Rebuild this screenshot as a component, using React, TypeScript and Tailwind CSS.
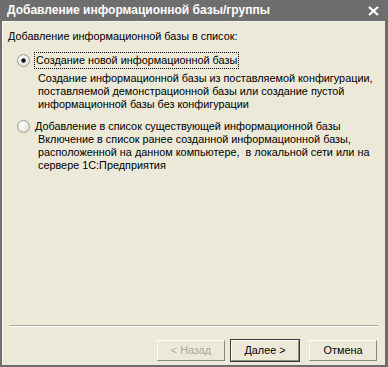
import React from "react";

function Btn({ children, def, disabled }: { children: React.ReactNode; def?: boolean; disabled?: boolean }) {
  return (
    <div
      className={
        "w-[70px] h-[23px] flex items-center justify-center " +
        (def ? "border border-[#3a3a3a]" : "border border-transparent")
      }
    >
      <div
        className={
          "w-full h-full flex items-center justify-center border-t border-l border-t-white border-l-white border-b border-r border-b-[#8a877c] border-r-[#8a877c] " +
          (disabled ? "text-[#aca899]" : "text-black")
        }
      >
        {children}
      </div>
    </div>
  );
}

function Radio({ checked }: { checked?: boolean }) {
  return (
    <svg width="13" height="13" viewBox="0 0 13 13" className="shrink-0">
      <defs>
        <radialGradient id="rg" cx="0.35" cy="0.35" r="0.8">
          <stop offset="0" stopColor="#ffffff" />
          <stop offset="1" stopColor="#dcdcd4" />
        </radialGradient>
      </defs>
      <circle cx="6.5" cy="6.5" r="6" fill="url(#rg)" stroke="#9a9a90" strokeWidth="1" />
      {checked && <circle cx="6.5" cy="6.5" r="2.2" fill="#111" />}
    </svg>
  );
}

export default function App() {
  return (
    <div
      className="w-[388px] h-[367px] bg-[#6e6e6e] flex flex-col pl-[2px] pr-[3px] pb-[2px] text-[10.85px] leading-[13px] text-black whitespace-nowrap"
      style={{ fontFamily: '"Liberation Sans", Arial, sans-serif' }}
    >
      <div className="h-[21px] flex items-center justify-between pl-[5px] pr-[6px] text-white font-bold text-[12px]">
        <span>Добавление информационной базы/группы</span>
        <svg width="11" height="10" viewBox="0 0 11 10">
          <path d="M1 1 L10 9 M10 1 L1 9" stroke="#fff" strokeWidth="2.2" />
        </svg>
      </div>
      <div className="flex-1 bg-[#ece9d8] border-t border-l border-[#f6f4ec] flex flex-col pl-[5px] pr-[6px]">
        <div className="mt-[8px]">Добавление информационной базы в список:</div>
        <div className="flex items-center mt-[9px] ml-[9px] gap-[4px]">
          <Radio checked />
          <span className="border border-dotted border-black px-[1px] py-[1px]">Создание новой информационной базы</span>
        </div>
        <div className="ml-[30px] mt-[3px]">
          <div>Создание информационной базы из поставляемой конфигурации,</div>
          <div>поставляемой демонстрационной базы или создание пустой</div>
          <div>информационной базы без конфигурации</div>
        </div>
        <div className="flex items-center mt-[9px] ml-[9px] gap-[5px]">
          <Radio />
          <span>Добавление в список существующей информационной базы</span>
        </div>
        <div className="ml-[30px]">
          <div>Включение в список ранее созданной информационной базы,</div>
          <div>расположенной на данном компьютере,&nbsp; в локальной сети или на</div>
          <div>сервере 1С:Предприятия</div>
        </div>
        <div className="flex-1" />
        <div className="h-[2px] border-t border-[#aca899] border-b border-b-white mr-[1px] ml-[1px]" />
        <div className="flex justify-end items-center mt-[12px] mb-[3px] pr-[1px]">
          <Btn disabled>&lt; Назад</Btn>
          <div className="w-[4px]" />
          <Btn def>Далее &gt;</Btn>
          <div className="w-[8px]" />
          <Btn>Отмена</Btn>
        </div>
      </div>
    </div>
  );
}
